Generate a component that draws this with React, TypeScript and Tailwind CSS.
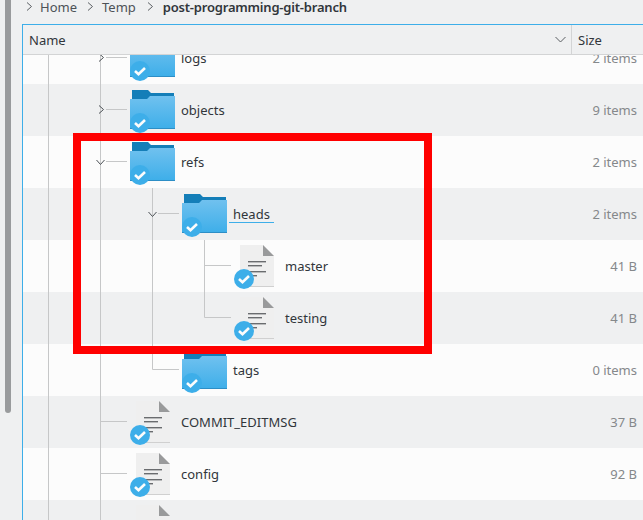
import React from 'react';

type Guide = 'none' | 'line' | 'tee' | 'elbow' | 'open' | 'closed';

interface RowData {
  name: string;
  size: string;
  kind: 'folder' | 'file';
  guides: Guide[];
  underline?: boolean;
}

const ROWS: RowData[] = [
  { name: 'logs', size: '2 items', kind: 'folder', guides: ['line', 'closed'] },
  { name: 'objects', size: '9 items', kind: 'folder', guides: ['line', 'closed'] },
  { name: 'refs', size: '2 items', kind: 'folder', guides: ['line', 'open'] },
  { name: 'heads', size: '2 items', kind: 'folder', guides: ['line', 'line', 'open'], underline: true },
  { name: 'master', size: '41 B', kind: 'file', guides: ['line', 'line', 'line', 'tee'] },
  { name: 'testing', size: '41 B', kind: 'file', guides: ['line', 'line', 'line', 'elbow'] },
  { name: 'tags', size: '0 items', kind: 'folder', guides: ['line', 'line', 'elbow'] },
  { name: 'COMMIT_EDITMSG', size: '37 B', kind: 'file', guides: ['line', 'tee'] },
  { name: 'config', size: '92 B', kind: 'file', guides: ['line', 'tee'] },
  { name: '', size: '', kind: 'file', guides: ['line', 'tee'] },
];

const Chevron = () => (
  <svg width="7" height="9" viewBox="0 0 7 9" fill="none" stroke="#5b5f63" strokeWidth="1">
    <path d="M1 .5l4.5 4-4.5 4" />
  </svg>
);

const TreeCell = ({ type }: { type: Guide }) => (
  <svg width="52" height="52" viewBox="0 0 52 52" fill="none" className="shrink-0">
    <g stroke="#c6c7c8" strokeWidth="1">
      {type !== 'elbow' && <path d="M25.5 0V52" />}
      {type === 'elbow' && <path d="M25.5 0V25.5" />}
      {(type === 'tee' || type === 'elbow') && <path d="M25.5 25.5H52" />}
      {(type === 'open' || type === 'closed') && <path d="M31 25.5H52" />}
    </g>
    {type === 'closed' && <path d="M24 21.5l4.5 4-4.5 4" stroke="#4d5257" strokeWidth="1" />}
    {type === 'open' && <path d="M21.5 24l4 4.5 4-4.5" stroke="#4d5257" strokeWidth="1" />}
  </svg>
);

const Badge = () => (
  <>
    <circle cx="11" cy="37" r="10" fill="#3daee9" />
    <path d="M6 37l3.5 3.2 6.5-6.2" fill="none" stroke="#fcfcfc" strokeWidth="2.6" />
  </>
);

const FolderIcon = () => (
  <svg width="48" height="48" viewBox="0 0 48 48" className="shrink-0">
    <defs>
      <linearGradient id="folderBody" x1="0" y1="0" x2="0" y2="1">
        <stop offset="0" stopColor="#70c1ef" />
        <stop offset="1" stopColor="#3daee9" />
      </linearGradient>
    </defs>
    <path d="M3 4H19L22 7H45V14H3Z" fill="#147eb8" />
    <path d="M1 13H18L21 10H46V43H1Z" fill="url(#folderBody)" />
    <rect x="1" y="42" width="45" height="1" fill="#2d8ec6" />
    <Badge />
  </svg>
);

const FileIcon = () => (
  <svg width="48" height="48" viewBox="0 0 48 48" className="shrink-0">
    <path d="M7 3H30L41 14V45H7Z" fill="#efefef" />
    <rect x="7" y="44" width="34" height="1" fill="#d0d0d0" />
    <path d="M30 3L41 14H30Z" fill="#999a9b" />
    <g fill="#6a6c6f">
      <rect x="15" y="19" width="18" height="1.4" />
      <rect x="15" y="23" width="14" height="1.4" />
      <rect x="15" y="29" width="18" height="1.4" />
      <rect x="15" y="33" width="9" height="1.4" />
    </g>
    <Badge />
  </svg>
);

const Row = ({ row, alt }: { row: RowData; alt: boolean }) => (
  <div className={`flex h-[52px] shrink-0 items-center ${alt ? 'bg-[#eff0f1]' : 'bg-[#fcfcfc]'}`}>
    {row.guides.map((g, i) => (
      <TreeCell key={i} type={g} />
    ))}
    <div className="ml-[2px] flex shrink-0 items-center">
      {row.kind === 'folder' ? <FolderIcon /> : <FileIcon />}
    </div>
    {row.underline ? (
      <span className="mt-[2px] border-b border-[#3daee9] pr-[4px] pb-[1px] pl-[4px] leading-[14px] text-[#31363b]">{row.name}</span>
    ) : (
      <span className="mt-[2px] ml-[4px] text-[#31363b]">{row.name}</span>
    )}
    <span className="mt-[2px] mr-[6px] ml-auto text-[#85888b]">{row.size}</span>
  </div>
);

export default function App() {
  return (
    <div className="relative flex h-[520px] w-[643px] overflow-hidden bg-[#eff0f1] font-['Noto_Sans',sans-serif] text-[13px]">
      <div className="w-[22px] shrink-0 pl-[5px]">
        <div className="h-[413px] w-[6px] rounded-b-[3px] bg-[#999b9d]" />
      </div>

      <div className="flex min-w-0 flex-1 flex-col">
        <div className="flex h-[24px] shrink-0 items-start leading-[14px] text-[#4d5257]">
          <span className="mt-[2px] ml-[4px]"><Chevron /></span>
          <span className="ml-[7px]">Home</span>
          <span className="mt-[2px] ml-[10px]"><Chevron /></span>
          <span className="ml-[8px]">Temp</span>
          <span className="mt-[2px] ml-[11px]"><Chevron /></span>
          <span className="ml-[9px] font-semibold tracking-[-0.2px] text-[#31363b]">post-programming-git-branch</span>
        </div>

        <div className="flex min-h-0 flex-1 flex-col border-t border-l border-[#3daee9]">
          <div className="z-10 flex h-[30px] shrink-0 items-center border-b border-[#d3d4d5] bg-[#eff0f1] text-[#31363b]">
            <span className="mt-[2px] pl-[6px]">Name</span>
            <svg width="11" height="7" viewBox="0 0 11 7" fill="none" stroke="#5b5f63" strokeWidth="1" className="mr-[5px] ml-auto">
              <path d="M.5 1l5 5 5-5" />
            </svg>
            <div className="h-full w-[1px] bg-[#d3d4d5]" />
            <span className="mt-[2px] w-[71px] pl-[6px]">Size</span>
          </div>

          <div className="min-h-0 flex-1 overflow-hidden">
            <div className="-mt-[23px] flex flex-col">
              {ROWS.map((row, i) => (
                <Row key={i} row={row} alt={i % 2 === 1} />
              ))}
            </div>
          </div>
        </div>
      </div>

      <div className="pointer-events-none absolute top-[133px] left-[73px] h-[221px] w-[359px] border-[8px] border-[#ff0000]" />
    </div>
  );
}
